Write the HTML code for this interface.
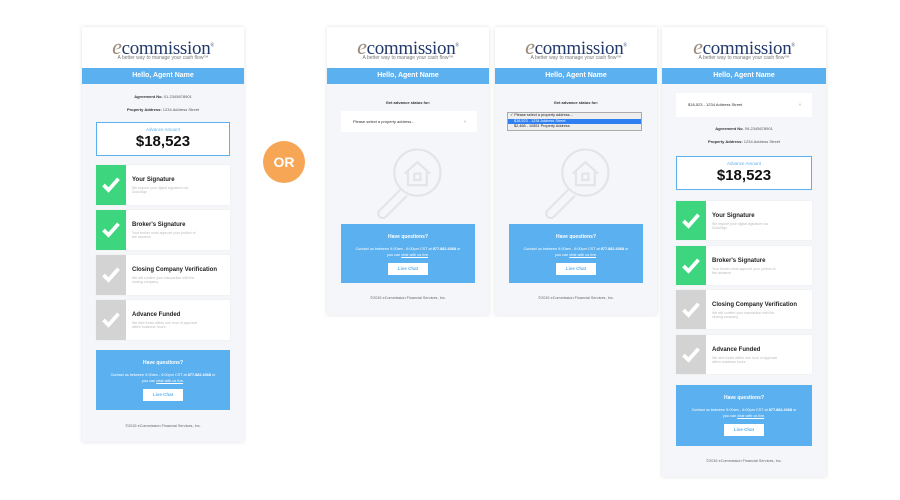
<!DOCTYPE html>
<html><head><style>
*{margin:0;padding:0;box-sizing:border-box}
body{width:900px;height:500px;background:#fff;position:relative;overflow:hidden;font-family:"Liberation Sans",sans-serif}
.p{position:absolute;background:#f4f6f9;box-shadow:0 0 4px rgba(0,0,0,.12)}
.p>*{position:absolute}
.logo{left:0;top:0;width:100%;height:41px;background:#fff;text-align:center}
.logo .l{position:absolute;left:0;right:0;top:7px;font-family:"Liberation Serif",serif;font-size:19px;color:#233a6b;letter-spacing:-.3px}
.logo .l i{color:#9b8a7a;font-size:22px}
.logo .t{position:absolute;left:0;right:0;top:28px;font-size:5px;color:#777}
.hd{left:0;width:100%;height:16px;background:#5bb0f0;color:#fff;font-weight:bold;font-size:7px;text-align:center;line-height:16px}
.tx{left:0;width:100%;text-align:center;font-size:4px;color:#555}
.tx b{color:#333}
.box{background:#fff;border:1px solid #5bb0f0;text-align:center}
.box .a{font-size:4.5px;color:#5bb0f0;margin-top:4px}
.box .n{font-size:15px;font-weight:bold;color:#111;margin-top:1px}
.c{background:#fff;box-shadow:0 0 2px rgba(0,0,0,.06)}
.c .s{position:absolute;left:0;top:0;width:30px;height:100%;background:#3dd67f}
.c .s.g{background:#d3d3d3}
.c .s svg{position:absolute;left:5px;top:50%;margin-top:-10px}
.c .h{position:absolute;left:36px;top:12px;font-size:6px;font-weight:bold;color:#222}
.c .d{position:absolute;left:36px;top:21px;font-size:3.5px;color:#bbb;width:68px}
.q{background:#5bb0f0;color:#fff;text-align:center}
.q .h{font-size:5px;font-weight:bold;margin-top:10px}
.q .d{font-size:3.8px;margin-top:6px;line-height:6px}
.q .b{width:40px;height:12px;background:#fff;color:#5bb0f0;font-size:4.5px;font-weight:bold;line-height:12px;margin:5px auto 0}
.ft{left:0;width:100%;text-align:center;font-size:3.8px;color:#666}
.sel{background:#fff;font-size:4px;color:#333;padding-left:12px}
.or{left:263px;top:141px;width:42px;height:42px;border-radius:50%;background:#f7a656;color:#fff;font-weight:bold;font-size:14px;text-align:center;line-height:42px;position:absolute}
</style></head><body>
<div class="or">OR</div>

<!-- P1 -->
<div class="p" style="left:82px;top:27px;width:162px;height:415px">
<div class="logo"><div class="l"><i>e</i>commission<sup style="font-size:5px">®</sup></div><div class="t">A better way to manage your cash flow™</div></div>
<div class="hd" style="top:41px">Hello, Agent Name</div>
<div class="tx" style="top:67px"><b>Agreement No.</b> 01-2345678901</div>
<div class="tx" style="top:80px"><b>Property Address:</b> 1234 Address Street</div>
<div class="box" style="left:14px;top:95px;width:134px;height:34px"><div class="a">Advance Amount</div><div class="n">$18,523</div></div>
<div class="c" style="left:14px;top:138px;width:134px;height:40px"><div class="s"><svg width="20" height="20" viewBox="0 0 16 16"><path d="M2 8l4 4 8-9" stroke="#fff" stroke-width="3" fill="none"/></svg></div><div class="h">Your Signature</div><div class="d">We require your digital signature via DocuSign</div></div>
<div class="c" style="left:14px;top:183px;width:134px;height:40px"><div class="s"><svg width="20" height="20" viewBox="0 0 16 16"><path d="M2 8l4 4 8-9" stroke="#fff" stroke-width="3" fill="none"/></svg></div><div class="h">Broker's Signature</div><div class="d">Your broker must approve your portion of the advance</div></div>
<div class="c" style="left:14px;top:228px;width:134px;height:40px"><div class="s g"><svg width="20" height="20" viewBox="0 0 16 16"><path d="M2 8l4 4 8-9" stroke="#fff" stroke-width="3" fill="none"/></svg></div><div class="h">Closing Company Verification</div><div class="d">We will confirm your transaction with the closing company</div></div>
<div class="c" style="left:14px;top:273px;width:134px;height:40px"><div class="s g"><svg width="20" height="20" viewBox="0 0 16 16"><path d="M2 8l4 4 8-9" stroke="#fff" stroke-width="3" fill="none"/></svg></div><div class="h">Advance Funded</div><div class="d">We wire funds within one hour of approval within business hours</div></div>
<div class="q" style="left:14px;top:323px;width:134px;height:60px"><div class="h">Have questions?</div><div class="d">Contact us between 9:00am - 6:00pm CST at <b>877.882.4368</b> or<br>you can <u>chat with us live</u>.</div><div class="b">Live Chat</div></div>
<div class="ft" style="top:397px">©2015 eCommission Financial Services, Inc.</div>
</div>

<!-- P2 -->
<div class="p" style="left:327px;top:27px;width:162px;height:288px">
<div class="logo"><div class="l"><i>e</i>commission<sup style="font-size:5px">®</sup></div><div class="t">A better way to manage your cash flow™</div></div>
<div class="hd" style="top:41px">Hello, Agent Name</div>
<div class="tx" style="top:73px"><b>Get advance status for:</b></div>
<div class="sel" style="left:14px;top:84px;width:136px;height:21px;line-height:21px">Please select a property address...<span style="position:absolute;right:10px;color:#ccc">▼</span></div>
<svg style="left:40px;top:112px" width="84" height="84" viewBox="0 0 80 80" fill="none" stroke="#e2e4e8" stroke-width="2"><circle cx="48" cy="32" r="22"/><path d="M36 33l12-11 12 11M39 30v14h18V30M45 33h6v6h-6z"/><path d="M32 48l-20 20a4 4 0 0 0 6 6l20-20"/></svg>
<div class="q" style="left:14px;top:197px;width:134px;height:59px"><div class="h">Have questions?</div><div class="d">Contact us between 9:00am - 6:00pm CST at <b>877.882.4368</b> or<br>you can <u>chat with us live</u>.</div><div class="b">Live Chat</div></div>
<div class="ft" style="top:269px">©2015 eCommission Financial Services, Inc.</div>
</div>

<!-- P3 -->
<div class="p" style="left:495px;top:27px;width:162px;height:288px">
<div class="logo"><div class="l"><i>e</i>commission<sup style="font-size:5px">®</sup></div><div class="t">A better way to manage your cash flow™</div></div>
<div class="hd" style="top:41px">Hello, Agent Name</div>
<div class="tx" style="top:73px"><b>Get advance status for:</b></div>
<div style="left:12px;top:85px;width:135px;height:19px;background:#eee;border:1px solid #aaa;font-size:3.8px;color:#222;line-height:5.5px">
<div style="padding-left:2px">✓ Please select a property address...</div>
<div style="background:#2f7ff0;color:#fff;padding-left:6px">$18,523 - 1234 Address Street</div>
<div style="padding-left:6px">$2,468 - 10851 Property Address</div></div>
<svg style="left:40px;top:112px" width="84" height="84" viewBox="0 0 80 80" fill="none" stroke="#e2e4e8" stroke-width="2"><circle cx="48" cy="32" r="22"/><path d="M36 33l12-11 12 11M39 30v14h18V30M45 33h6v6h-6z"/><path d="M32 48l-20 20a4 4 0 0 0 6 6l20-20"/></svg>
<div class="q" style="left:14px;top:197px;width:134px;height:59px"><div class="h">Have questions?</div><div class="d">Contact us between 9:00am - 6:00pm CST at <b>877.882.4368</b> or<br>you can <u>chat with us live</u>.</div><div class="b">Live Chat</div></div>
<div class="ft" style="top:269px">©2015 eCommission Financial Services, Inc.</div>
</div>

<!-- P4 -->
<div class="p" style="left:662px;top:27px;width:164px;height:450px">
<div class="logo"><div class="l"><i>e</i>commission<sup style="font-size:5px">®</sup></div><div class="t">A better way to manage your cash flow™</div></div>
<div class="hd" style="top:41px">Hello, Agent Name</div>
<div class="sel" style="left:14px;top:66px;width:136px;height:24px;line-height:24px">$18,523 - 1234 Address Street<span style="position:absolute;right:10px;color:#ccc">▼</span></div>
<div class="tx" style="top:99px"><b>Agreement No.</b> 09-2345678901</div>
<div class="tx" style="top:112px"><b>Property Address:</b> 1234 Address Street</div>
<div class="box" style="left:14px;top:129px;width:136px;height:34px"><div class="a">Advance Amount</div><div class="n">$18,523</div></div>
<div class="c" style="left:14px;top:174px;width:136px;height:39px"><div class="s"><svg width="20" height="20" viewBox="0 0 16 16"><path d="M2 8l4 4 8-9" stroke="#fff" stroke-width="3" fill="none"/></svg></div><div class="h">Your Signature</div><div class="d">We require your digital signature via DocuSign</div></div>
<div class="c" style="left:14px;top:219px;width:136px;height:39px"><div class="s"><svg width="20" height="20" viewBox="0 0 16 16"><path d="M2 8l4 4 8-9" stroke="#fff" stroke-width="3" fill="none"/></svg></div><div class="h">Broker's Signature</div><div class="d">Your broker must approve your portion of the advance</div></div>
<div class="c" style="left:14px;top:263px;width:136px;height:39px"><div class="s g"><svg width="20" height="20" viewBox="0 0 16 16"><path d="M2 8l4 4 8-9" stroke="#fff" stroke-width="3" fill="none"/></svg></div><div class="h">Closing Company Verification</div><div class="d">We will confirm your transaction with the closing company</div></div>
<div class="c" style="left:14px;top:308px;width:136px;height:39px"><div class="s g"><svg width="20" height="20" viewBox="0 0 16 16"><path d="M2 8l4 4 8-9" stroke="#fff" stroke-width="3" fill="none"/></svg></div><div class="h">Advance Funded</div><div class="d">We wire funds within one hour of approval within business hours</div></div>
<div class="q" style="left:14px;top:358px;width:136px;height:61px"><div class="h">Have questions?</div><div class="d">Contact us between 9:00am - 6:00pm CST at <b>877.882.4368</b> or<br>you can <u>chat with us live</u>.</div><div class="b">Live Chat</div></div>
<div class="ft" style="top:432px">©2015 eCommission Financial Services, Inc.</div>
</div>
</body></html>
